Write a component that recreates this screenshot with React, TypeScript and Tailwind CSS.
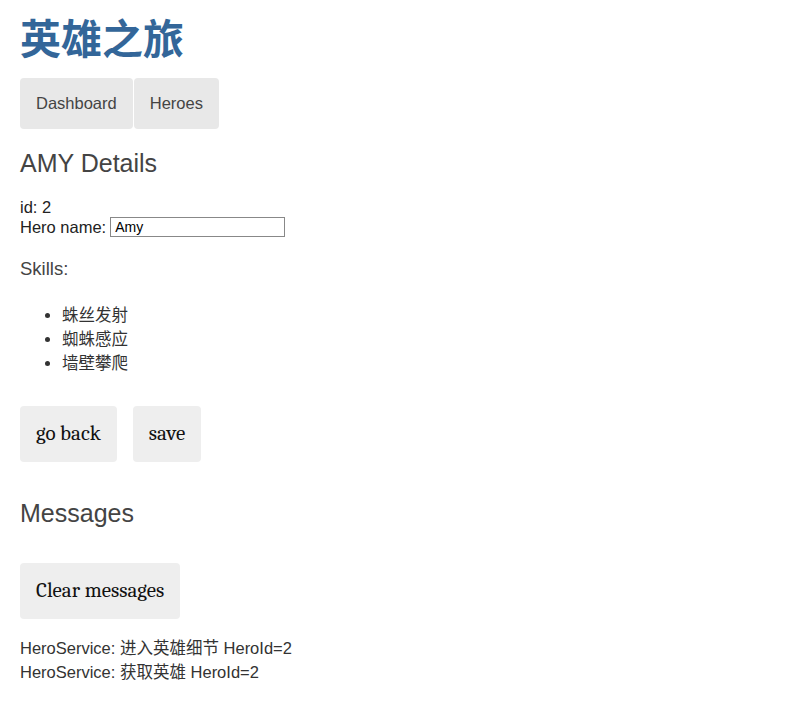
import React from 'react';

const sans = "font-['Arial','Liberation_Sans','Noto_Sans_CJK_SC',sans-serif]";
const serif = "font-['Cambria','Liberation_Serif','Noto_Sans_CJK_SC',serif]";

const skills = ['蛛丝发射', '蜘蛛感应', '墙壁攀爬'];
const messages = ['HeroService: 进入英雄细节 HeroId=2', 'HeroService: 获取英雄 HeroId=2'];

export default function App() {
  return (
    <div className={`min-h-screen bg-white px-5 pt-[12px] text-[#333] ${sans}`}>
      <h1 className="text-[41px] font-bold leading-[56px] text-[#336699]">英雄之旅</h1>

      <nav className="mt-[10px] flex">
        <a className="rounded bg-[#e8e8e8] px-4 py-4 text-[16.5px] leading-[19px] text-[#444]">Dashboard</a>
        <a className="ml-px rounded bg-[#e8e8e8] px-4 py-4 text-[16.5px] leading-[19px] text-[#444]">Heroes</a>
      </nav>

      <h2 className="mt-[20px] text-[25px] leading-7 text-[#444]">AMY Details</h2>

      <div className="mt-[21px] text-[16.5px] leading-[19px] text-[#222]">
        <div>id: 2</div>
        <div className="flex items-center">
          <span>Hero name:</span>
          <input
            defaultValue="Amy"
            className="ml-1 h-[20px] w-[175px] border border-[#888] px-1 text-sm leading-[18px] text-black"
          />
        </div>
      </div>

      <h3 className="mt-[20px] text-[18.5px] leading-6 text-[#444]">Skills:</h3>
      <ul className="mt-[22px] list-disc pl-[42px] text-[16.5px] leading-6 text-[#333]">
        {skills.map((s) => (
          <li key={s}>{s}</li>
        ))}
      </ul>

      <div className="mt-[31px] flex gap-4">
        <button className={`h-[56px] rounded bg-[#eee] px-4 text-[21px] text-[#111] ${serif}`}>go back</button>
        <button className={`h-[56px] rounded bg-[#eee] px-4 text-[21px] text-[#111] ${serif}`}>save</button>
      </div>

      <h2 className="mt-[37px] text-[25px] leading-7 text-[#444]">Messages</h2>

      <button className={`mt-[36px] h-[56px] rounded bg-[#eee] px-4 text-[21px] text-[#111] ${serif}`}>
        Clear messages
      </button>

      <div className="mt-[17px] text-[16.5px] leading-6 text-[#333]">
        {messages.map((m) => (
          <div key={m}>{m}</div>
        ))}
      </div>
    </div>
  );
}
